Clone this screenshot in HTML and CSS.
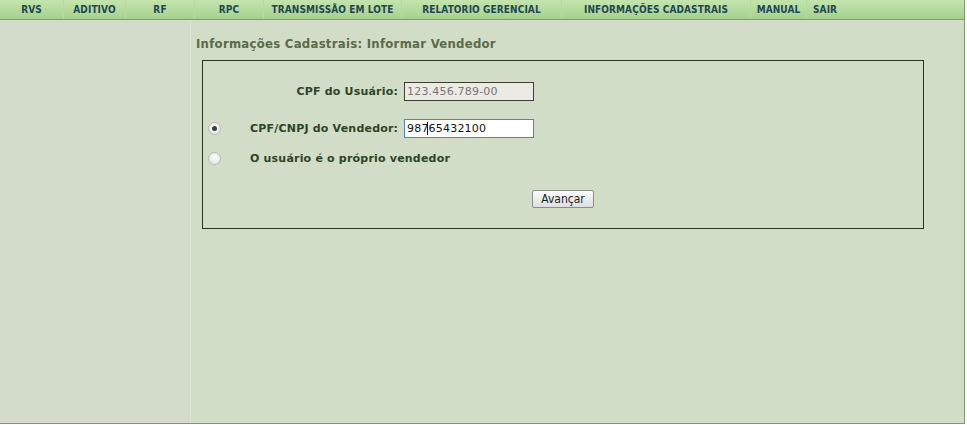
FILE: index.html
```html
<!DOCTYPE html>
<html lang="pt-BR">
<head>
<meta charset="utf-8">
<title>Informar Vendedor</title>
<link rel="stylesheet" href="styles.css">
</head>
<body>
<div class="page">
  <nav class="menu">
    <a class="item w-rvs">RVS</a>
    <a class="item w-aditivo">ADITIVO</a>
    <a class="item w-rf">RF</a>
    <a class="item w-rpc">RPC</a>
    <a class="item w-lote">TRANSMISSÃO EM LOTE</a>
    <a class="item w-rel">RELATORIO GERENCIAL</a>
    <a class="item w-info">INFORMAÇÕES CADASTRAIS</a>
    <a class="item w-manual">MANUAL</a>
    <a class="item w-sair">SAIR</a>
  </nav>
  <div class="body">
    <aside class="sidebar"></aside>
    <main class="main">
      <h1 class="title">Informações Cadastrais: Informar Vendedor</h1>
      <form class="box">
        <div class="row row-first">
          <span class="radio-cell"></span>
          <label class="label">CPF do Usuário:</label>
          <input class="field field-disabled" type="text" value="123.456.789-00" readonly>
        </div>
        <div class="row row-second">
          <span class="radio-cell"><input class="radio" type="radio" name="v" checked></span>
          <label class="label">CPF/CNPJ do Vendedor:</label>
          <span class="field-wrap"><input class="field field-focus" type="text" value="98765432100"><span class="caret"></span></span>
        </div>
        <div class="row">
          <span class="radio-cell"><input class="radio" type="radio" name="v"></span>
          <label class="label label-wide">O usuário é o próprio vendedor</label>
        </div>
        <div class="actions">
          <button type="button" class="btn">Avançar</button>
        </div>
      </form>
    </main>
  </div>
</div>
</body>
</html>
```

FILE: styles.css
```css
html, body {
  margin: 0;
  padding: 0;
  background: #ffffff;
}

.page {
  width: 964px;
  height: 423px;
  border-right: 1px solid #7d9a6c;
  border-bottom: 1px solid #7d9a6c;
  background: #d1ddc6;
  display: flex;
  flex-direction: column;
  font-family: "DejaVu Sans Condensed", "DejaVu Sans", sans-serif;
}

.menu {
  display: flex;
  height: 19px;
  background: linear-gradient(#c4e4ae, #a6d18d);
  border-bottom: 1px solid #77a163;
  flex-shrink: 0;
}

.item {
  display: flex;
  align-items: center;
  justify-content: center;
  height: 19px;
  font-size: 10px;
  font-weight: bold;
  color: #1f4753;
  border-right: 1px solid #b6d9a1;
  box-sizing: border-box;
  white-space: nowrap;
  letter-spacing: 0.1px;
}

.w-rvs { width: 64px; }
.w-aditivo { width: 62px; }
.w-rf { width: 69px; }
.w-rpc { width: 69px; }
.w-lote { width: 138px; }
.w-rel { width: 160px; }
.w-info { width: 189px; }
.w-manual { width: 56px; }
.w-sair { width: 60px; justify-content: flex-start; padding-left: 6px; border-right: none; }

.body {
  flex: 1;
  display: flex;
}

.sidebar {
  width: 190px;
  border-right: 1px solid #dbe4d2;
  background: #d2dcc8;
}

.main {
  flex: 1;
  padding-left: 5px;
}

.title {
  margin: 16px 0 0 0;
  font-size: 13px;
  font-weight: bold;
  color: #5a6b47;
  line-height: 16px;
  height: 24px;
  letter-spacing: 0.27px;
}

.box {
  margin: 0 0 0 6px;
  width: 722px;
  height: 169px;
  border: 1px solid #26351c;
  box-sizing: border-box;
  padding-top: 21px;
}

.row {
  display: flex;
  align-items: center;
  height: 19px;
  gap: 6px;
}

.row-first { margin-bottom: 18px; }
.row-second { margin-bottom: 11px; }

.radio-cell {
  display: flex;
  align-items: center;
  box-sizing: border-box;
  width: 41px;
  padding-left: 5px;
  height: 19px;
}

.radio {
  appearance: none;
  -webkit-appearance: none;
  margin: 0;
  width: 13px;
  height: 13px;
  border-radius: 50%;
  border: 1px solid #b9bcb6;
  background: radial-gradient(circle at 50% 40%, #ffffff, #dcdcdc);
  box-sizing: border-box;
  display: grid;
  place-items: center;
}

.radio:checked::after {
  content: "";
  width: 5px;
  height: 5px;
  border-radius: 50%;
  background: #3f3f3f;
}

.label {
  width: 148px;
  font-family: "DejaVu Sans", sans-serif;
  font-size: 11px;
  font-weight: bold;
  color: #2e4426;
  text-align: right;
  white-space: nowrap;
  line-height: 19px;
  letter-spacing: 0.2px;
}

.label-wide {
  text-align: left;
  width: auto;
}

.field-wrap {
  position: relative;
  display: block;
  height: 19px;
}

.field {
  width: 130px;
  height: 19px;
  box-sizing: border-box;
  margin: 0;
  padding: 0 2px;
  font-family: "DejaVu Sans", sans-serif;
  font-size: 11px;
  letter-spacing: 0.2px;
  outline: none;
  display: block;
}

.field-disabled {
  border: 1px solid #3e3f33;
  background: #ebeae5;
  color: #767676;
}

.field-focus {
  border: 1px solid #4f85c6;
  background: #ffffff;
  color: #111111;
}

.caret {
  position: absolute;
  left: 23px;
  top: 3px;
  width: 1px;
  height: 13px;
  background: #111111;
}

.actions {
  display: flex;
  justify-content: center;
  padding-top: 22px;
}

.btn {
  height: 18px;
  width: 62px;
  padding: 0;
  border: 1px solid #8c8c8c;
  border-radius: 2px;
  background: linear-gradient(#fbfbfb, #dedede);
  font-family: "DejaVu Sans Condensed", "DejaVu Sans", sans-serif;
  font-size: 12px;
  color: #222222;
  line-height: 16px;
}
```
